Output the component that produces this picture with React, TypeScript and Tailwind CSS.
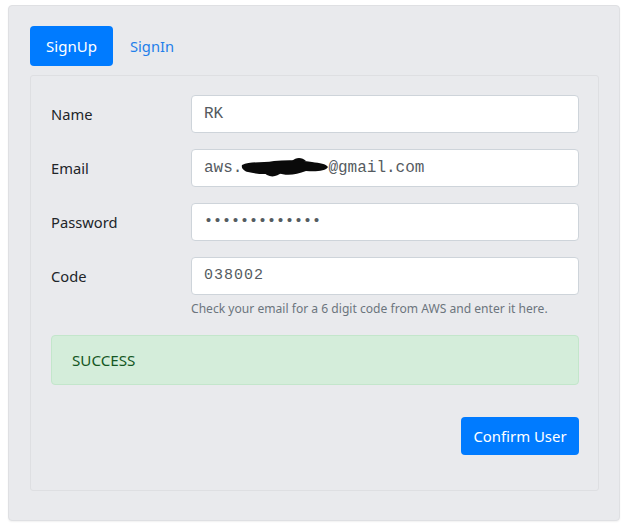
import React from "react";

const sans = { fontFamily: '"Noto Sans", "Open Sans", Arial, sans-serif' } as React.CSSProperties;
const mono = { fontFamily: '"Liberation Mono", "Courier New", monospace' } as React.CSSProperties;

function Field({ label, children }: { label: string; children: React.ReactNode }) {
  return (
    <div className="flex items-start">
      <div className="w-[140px] h-[38px] flex items-center text-[14.7px] text-[#212529]">{label}</div>
      <div className="flex-1">{children}</div>
    </div>
  );
}

function Input({ children }: { children: React.ReactNode }) {
  return (
    <div
      className="h-[38px] bg-white border border-[#ced4da] rounded-[4px] flex items-center pl-[12px] text-[16px] text-[#555b61]"
      style={mono}
    >
      {children}
    </div>
  );
}

export default function App() {
  return (
    <div className="w-[629px] h-[531px] bg-white pt-[5px] pl-[8px]" style={sans}>
      <div className="w-[612px] h-[516px] bg-[#e9eaed] rounded-[4px] border border-[#dfe0e3] shadow-[0_1px_2px_rgba(0,0,0,0.06)] pt-[20px] pl-[21px] pr-[20px]">
        <div className="flex items-center h-[40px]">
          <div className="h-[40px] w-[83px] bg-[#007bff] text-white rounded-[4px] flex items-center justify-center text-[15px]">
            SignUp
          </div>
          <div className="ml-[17px] text-[14.7px] text-[#1f80ea]">SignIn</div>
        </div>
        <div className="mt-[9px] h-[416px] border border-[#dedfe2] rounded-[3px] bg-[#e9eaed] pt-[19px] pl-[20px] pr-[19px]">
          <div className="flex flex-col gap-[16px]">
            <Field label="Name">
              <Input>RK</Input>
            </Field>
            <Field label="Email">
              <Input>
                <span>aws.</span>
                <span className="relative inline-block w-[86px] h-[16px]">
                  <svg width="90" height="22" viewBox="0 0 90 22" className="absolute left-[-2px] top-[-3px]">
                    <path
                      d="M2 8 C10 4, 24 6, 34 4 C46 3, 60 3, 72 5 C80 6, 86 7, 88 10 C86 14, 76 15, 66 14 C56 18, 46 19, 38 16 C26 18, 16 17, 8 15 C4 14, 1 11, 2 8 Z"
                      fill="#0a0a0a"
                    />
                    <path d="M22 14 C28 21, 36 21, 42 15 Z" fill="#0a0a0a" />
                    <path d="M52 4 C56 0, 62 0, 66 4 Z" fill="#0a0a0a" />
                  </svg>
                </span>
                <span>@gmail.com</span>
              </Input>
            </Field>
            <Field label="Password">
              <Input>
                <span className="text-[15px]">•••••••••••••</span>
              </Input>
            </Field>
            <Field label="Code">
              <Input>
                <span className="text-[15px] tracking-[1px]">038002</span>
              </Input>
              <div className="mt-[5px] text-[12.1px] text-[#6c757d] leading-[18px]">
                Check your email for a 6 digit code from AWS and enter it here.
              </div>
            </Field>
          </div>
          <div className="mt-[17px] h-[50px] bg-[#d4edda] border border-[#c3e6cb] rounded-[4px] flex items-center pl-[20px] text-[15.2px] text-[#155724]">
            SUCCESS
          </div>
          <div className="mt-[32px] flex justify-end">
            <div className="h-[38px] w-[118px] bg-[#007bff] text-white rounded-[4px] flex items-center justify-center text-[14.9px]">
              Confirm User
            </div>
          </div>
        </div>
      </div>
    </div>
  );
}
